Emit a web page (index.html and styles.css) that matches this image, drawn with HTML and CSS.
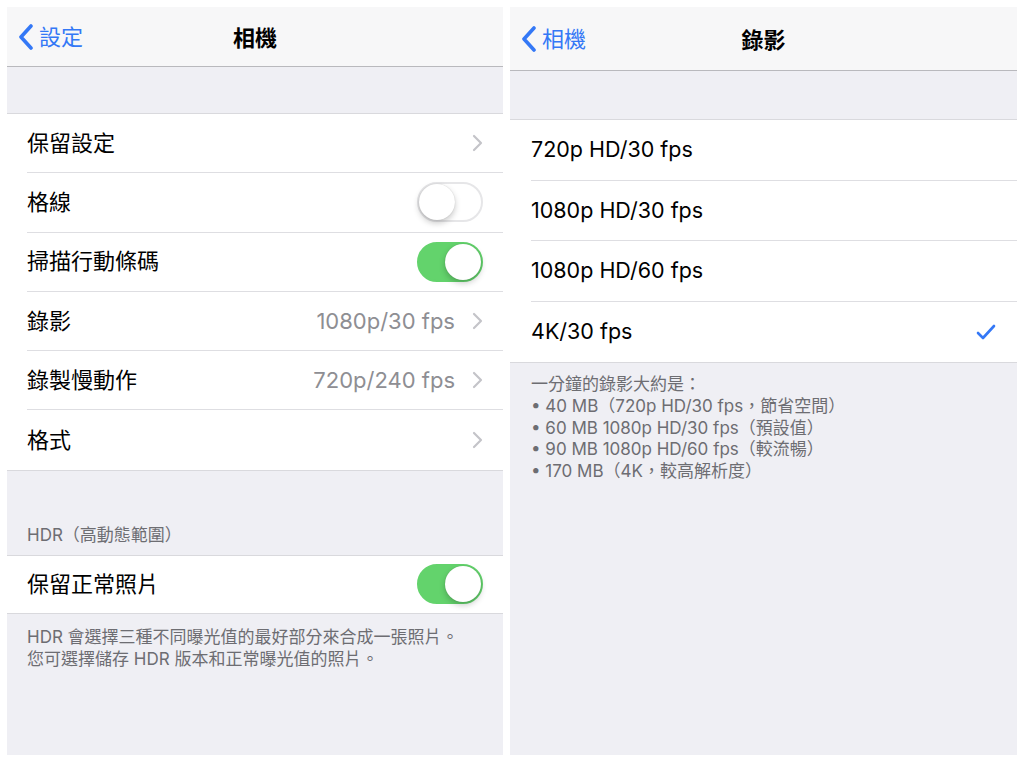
FILE: index.html
```html
<!DOCTYPE html>
<html lang="zh-Hant">
  <head>
    <meta charset="UTF-8" />
    <meta name="viewport" content="width=device-width, initial-scale=1.0" />
    <title>相機 / 錄影</title>
    <link rel="stylesheet" href="styles.css">
  </head>
  <body>
    <!-- Camera settings screen -->
    <div class="screen screen-left">
      <div class="navbar">
        <div class="back">
          <svg class="back-icon" width="16" height="26" viewBox="0 0 16 26"><polyline points="13,2 3,13 13,24" /></svg>
          <span>設定</span>
        </div>
        <div class="nav-title">相機</div>
      </div>

      <div class="spacer"></div>

      <div class="group">
        <div class="row">
          <span class="label">保留設定</span>
          <svg class="chevron" width="11" height="18" viewBox="0 0 11 18"><polyline points="2,2 9,9 2,16" /></svg>
        </div>
        <div class="row">
          <span class="label">格線</span>
          <div class="toggle"><div class="knob"></div></div>
        </div>
        <div class="row">
          <span class="label">掃描行動條碼</span>
          <div class="toggle on"><div class="knob"></div></div>
        </div>
        <div class="row">
          <span class="label">錄影</span>
          <span class="value">1080p/30 fps</span>
          <svg class="chevron" width="11" height="18" viewBox="0 0 11 18"><polyline points="2,2 9,9 2,16" /></svg>
        </div>
        <div class="row">
          <span class="label">錄製慢動作</span>
          <span class="value">720p/240 fps</span>
          <svg class="chevron" width="11" height="18" viewBox="0 0 11 18"><polyline points="2,2 9,9 2,16" /></svg>
        </div>
        <div class="row">
          <span class="label">格式</span>
          <svg class="chevron" width="11" height="18" viewBox="0 0 11 18"><polyline points="2,2 9,9 2,16" /></svg>
        </div>
      </div>

      <div class="section-header">HDR（高動態範圍）</div>

      <div class="group">
        <div class="row row-short">
          <span class="label">保留正常照片</span>
          <div class="toggle on"><div class="knob"></div></div>
        </div>
      </div>

      <div class="footer">
        HDR 會選擇三種不同曝光值的最好部分來合成一張照片。<br />
        您可選擇儲存 HDR 版本和正常曝光值的照片。
      </div>
    </div>

    <!-- Record video screen -->
    <div class="screen screen-right">
      <div class="navbar navbar-tall">
        <div class="back">
          <svg class="back-icon" width="16" height="26" viewBox="0 0 16 26"><polyline points="13,2 3,13 13,24" /></svg>
          <span>相機</span>
        </div>
        <div class="nav-title">錄影</div>
      </div>

      <div class="spacer spacer-tall"></div>

      <div class="group">
        <div class="row row-tall">
          <span class="label label-latin">720p HD/30 fps</span>
        </div>
        <div class="row row-tall">
          <span class="label label-latin">1080p HD/30 fps</span>
        </div>
        <div class="row row-tall">
          <span class="label label-latin">1080p HD/60 fps</span>
        </div>
        <div class="row row-tall">
          <span class="label label-latin">4K/30 fps</span>
          <svg class="check" width="20" height="16" viewBox="0 0 20 16"><polyline points="2,9 7,14 18,2" /></svg>
        </div>
      </div>

      <div class="footer footer-list">
        一分鐘的錄影大約是：<br />
        • 40 MB（720p HD/30 fps，節省空間）<br />
        • 60 MB 1080p HD/30 fps（預設值）<br />
        • 90 MB 1080p HD/60 fps（較流暢）<br />
        • 170 MB（4K，較高解析度）
      </div>
    </div>
  </body>
</html>
```

FILE: styles.css
```css
* {
  margin: 0;
  padding: 0;
  box-sizing: border-box;
}

body {
  font-family: Inter, "Noto Sans CJK TC", sans-serif;
  background-color: #ffffff;
  color: #000;
  display: flex;
  gap: 7px;
  padding: 7px;
  height: 762px;
  overflow: hidden;
}

.screen {
  background-color: #efeff4;
  height: 748px;
  display: flex;
  flex-direction: column;
}

.screen-left {
  width: 496px;
}

.screen-right {
  width: 507px;
}

/* navigation bar */
.navbar {
  height: 60px;
  background-color: #f7f7f8;
  border-bottom: 1px solid #b9b9bd;
  display: flex;
  align-items: center;
  justify-content: center;
  position: relative;
}

.navbar-tall {
  height: 64px;
}

.back {
  position: absolute;
  left: 11px;
  top: 0;
  bottom: 0;
  display: flex;
  align-items: center;
  gap: 5px;
  color: #3478f6;
  font-size: 22px;
}

.back span {
  padding-bottom: 4px;
}

.back-icon polyline {
  fill: none;
  stroke: #3478f6;
  stroke-width: 3.6;
  stroke-linecap: round;
  stroke-linejoin: round;
}

.nav-title {
  font-size: 22px;
  font-weight: bold;
  padding-bottom: 2px;
}

.spacer {
  height: 46px;
}

.spacer-tall {
  height: 48px;
}

/* grouped table */
.group {
  background-color: #ffffff;
  border-top: 1px solid #d9d9dd;
  border-bottom: 1px solid #d9d9dd;
}

.row {
  height: 59.3px;
  display: flex;
  align-items: center;
  margin-left: 20px;
  padding-right: 20px;
  border-bottom: 1px solid #dedee2;
  font-size: 22px;
}

.row:last-child {
  border-bottom: none;
}

.row-short {
  height: 57px;
}

.row-tall {
  height: 60.5px;
  margin-left: 21px;
}

.label {
  flex: 1;
  padding-bottom: 5px;
}

.label-latin {
  font-size: 21.5px;
  padding-bottom: 1px;
}

.value {
  color: #8e8e93;
  margin-right: 17px;
}

.chevron polyline {
  fill: none;
  stroke: #c4c4c9;
  stroke-width: 2.2;
  stroke-linecap: round;
  stroke-linejoin: round;
}

.check {
  margin-right: 1px;
}

.check polyline {
  fill: none;
  stroke: #3478f6;
  stroke-width: 2.6;
  stroke-linecap: round;
  stroke-linejoin: round;
}

/* switch */
.toggle {
  width: 66px;
  height: 40px;
  border-radius: 20px;
  border: 2px solid #e6e6e8;
  background-color: #ffffff;
  position: relative;
}

.toggle .knob {
  position: absolute;
  top: 0;
  left: 0;
  width: 36px;
  height: 36px;
  border-radius: 50%;
  background-color: #ffffff;
  box-shadow: 0 3px 6px rgba(0, 0, 0, 0.22), 0 0 1px rgba(0, 0, 0, 0.2);
}

.toggle.on {
  background-color: #63d36c;
  border-color: #63d36c;
}

.toggle.on .knob {
  left: 26px;
}

/* section texts */
.section-header {
  height: 84px;
  display: flex;
  align-items: flex-end;
  padding: 0 20px 9px;
  color: #6d6d72;
  font-size: 17px;
}

.footer {
  padding: 12px 20px;
  color: #6d6d72;
  font-size: 17px;
  line-height: 22px;
}

.footer-list {
  padding: 11px 21px;
  line-height: 21.8px;
}
```
